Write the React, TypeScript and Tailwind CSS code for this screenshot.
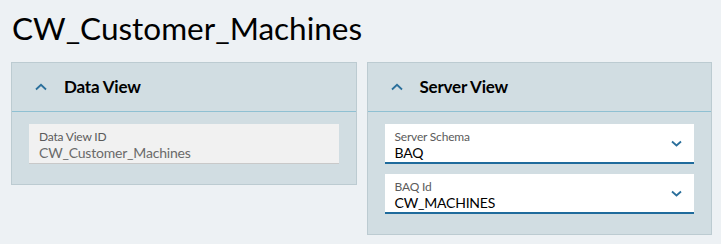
import React from "react";

const ChevronUp = () => (
  <svg width="12" height="8" viewBox="0 0 12 8" fill="none">
    <path d="M1 6.5L6 1.8l5 4.7" stroke="#2a6f9b" strokeWidth="1.8" />
  </svg>
);

const ChevronDown = () => (
  <svg width="11" height="7" viewBox="0 0 11 7" fill="none">
    <path d="M1 1.5l4.5 4 4.5-4" stroke="#2a6f9b" strokeWidth="1.8" />
  </svg>
);

const Panel: React.FC<{ title: string; children: React.ReactNode }> = ({ title, children }) => (
  <div className="border border-[#bccbd1] bg-[#d1dde2]">
    <div className="flex h-[49px] items-center border-b border-[#8fc0d2] pl-[23px]">
      <ChevronUp />
      <span className="ml-[17px] text-[17px] font-bold tracking-[-0.2px] text-black">{title}</span>
    </div>
    <div className="flex flex-col gap-[10px] px-[17px] pt-[12px] pb-[20px]">{children}</div>
  </div>
);

const SelectField: React.FC<{ label: string; value: string }> = ({ label, value }) => (
  <div className="flex h-[40px] items-center border-b-2 border-[#1f6b9c] bg-white pl-[10px] pr-[12px]">
    <div className="flex flex-1 flex-col self-start pt-[7px] leading-none">
      <span className="text-[12px] tracking-[-0.2px] text-[#5b5b5b]">{label}</span>
      <span className="mt-[3px] text-[14px] tracking-[-0.2px] text-black">{value}</span>
    </div>
    <ChevronDown />
  </div>
);

export default function App() {
  return (
    <div
      className="h-[244px] w-[721px] bg-[#edf1f4] pl-[11px] pr-[9px]"
      style={{ fontFamily: '"Source Sans Pro", Lato, "Noto Sans", sans-serif' }}
    >
      <h1 className="h-[62px] pt-[9px] pl-px text-[31.5px] leading-[38px] text-black">CW_Customer_Machines</h1>
      <div className="grid grid-cols-2 items-start gap-[10px]">
        <Panel title="Data View">
          <div className="flex h-[40px] flex-col border-b border-[#c9c9c9] bg-[#f1f1f1] pt-[7px] pl-[10px] leading-none">
            <span className="text-[12px] tracking-[-0.2px] text-[#5b5b5b]">Data View ID</span>
            <span className="mt-[3px] text-[14px] tracking-[-0.2px] text-[#6a6a6a]">CW_Customer_Machines</span>
          </div>
        </Panel>
        <Panel title="Server View">
          <SelectField label="Server Schema" value="BAQ" />
          <SelectField label="BAQ Id" value="CW_MACHINES" />
        </Panel>
      </div>
    </div>
  );
}
